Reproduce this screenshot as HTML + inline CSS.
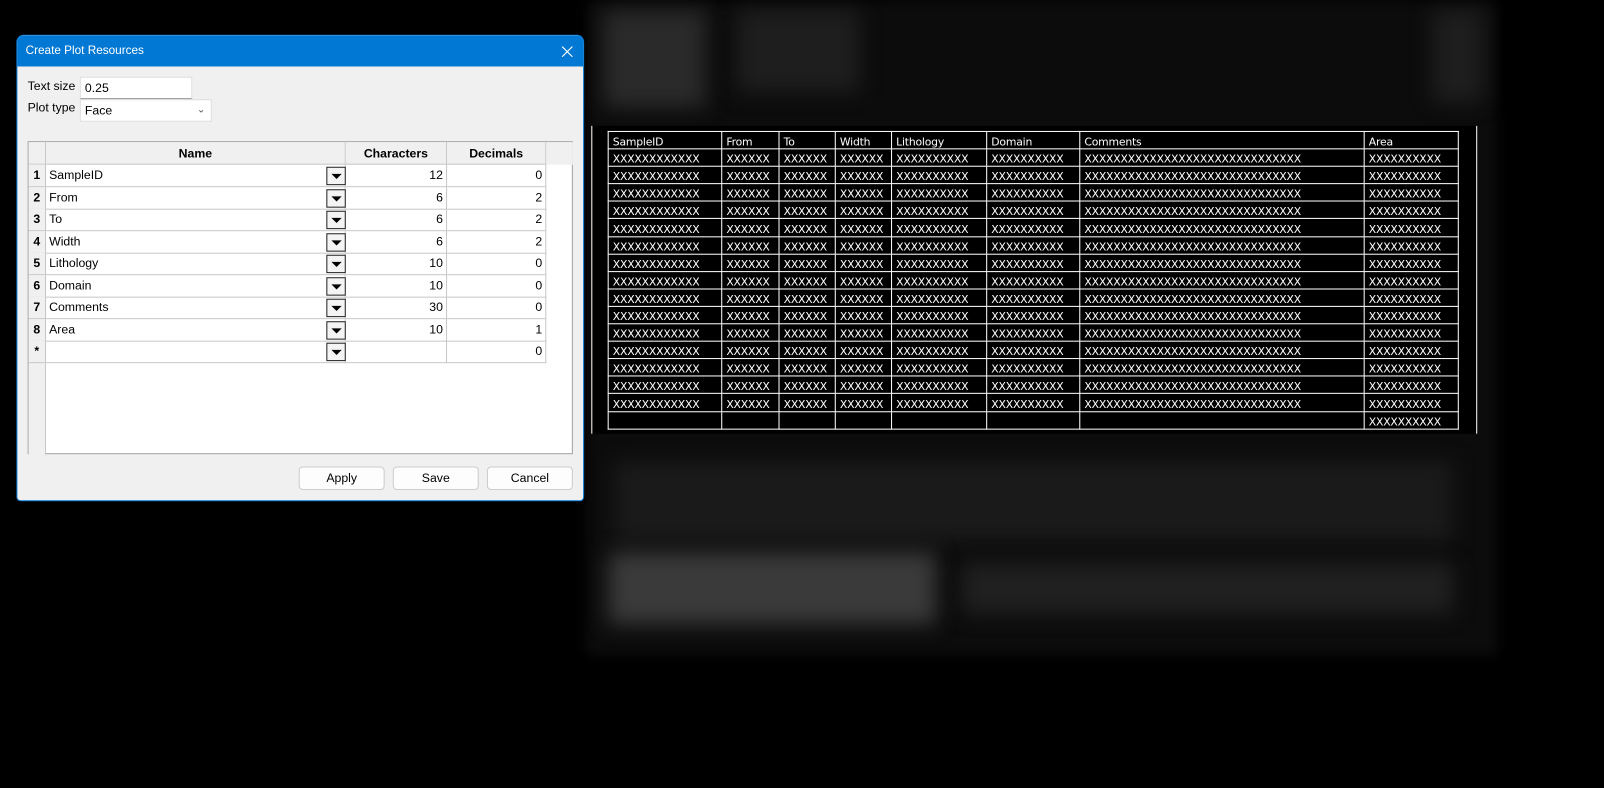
<!DOCTYPE html>
<html><head><meta charset="utf-8"><style>
*{box-sizing:border-box;margin:0;padding:0}
body{width:1604px;height:787px;background:#000;position:relative;overflow:hidden;font-family:"Segoe UI","Liberation Sans",sans-serif;font-size:12px;color:#000}
#wrap{position:absolute;left:0;top:0;width:1568px;height:770px;transform:scale(1.023);transform-origin:0 0}
.bl{position:absolute;filter:blur(10px)}
#dlg{position:absolute;left:16px;top:34px;width:555px;height:456px;background:#f0f0f0;border:1px solid #0078d4;border-radius:7px 7px 4px 4px;overflow:hidden}
#tb{height:30px;background:#0078d4;color:#fff;font-size:11.5px;line-height:30px;padding-left:8px;position:relative}
#tb svg{position:absolute;right:10px;top:10px}
.lbl{position:absolute;font-size:12px}
.inp{position:absolute;background:#fff;border:1px solid #ddd;border-bottom:1px solid #888;font-size:12px;padding-left:4px;line-height:20px}
#grid{position:absolute;left:10px;top:103px;width:533px;height:306px;background:#fff;border:1px solid #a0a0a0}
.gh{position:absolute;top:0;height:22px;background:#f0f0f0;border-right:1px solid #c8c8c8;border-bottom:1px solid #c8c8c8;font-weight:bold;text-align:center;line-height:22px;font-size:12px}
.rn{position:absolute;left:0;width:17px;background:#f0f0f0;font-weight:bold;text-align:center;border-bottom:1px solid #c8c8c8;border-right:1px solid #c8c8c8}
.c{position:absolute;border-right:1px solid #c8c8c8;border-bottom:1px solid #c8c8c8;line-height:21px;height:22px;font-size:12px}
.dd{position:absolute;width:19px;height:18px;border:1px solid #222;background:#f4f4f4}
.dd:after{content:"";position:absolute;left:4px;top:6px;border-left:5px solid transparent;border-right:5px solid transparent;border-top:5px solid #000}
.btn{position:absolute;top:421px;width:84px;height:23px;border:1px solid #ccc;background:#fdfdfd;border-radius:4px;text-align:center;line-height:21px;font-size:12px}
#plot{position:absolute;left:578px;top:123px;width:866px;height:301px;background:#000;border-left:1px solid #fff;border-right:1px solid #fff}
table{position:absolute;left:15px;top:5px;border-collapse:collapse;color:#fff;font-family:"DejaVu Sans","Liberation Sans",sans-serif;font-size:10.6px;letter-spacing:-0.2px}
tr{height:17.1px}
td{border:1px solid #fff;height:17.1px;padding:3px 4px 0 4px;line-height:12px;white-space:nowrap;overflow:hidden;vertical-align:bottom}
</style></head><body><div id="wrap">
<div style="position:absolute;left:573px;top:0;width:890px;height:640px;background:#0c0c0c;filter:blur(6px)"></div>
<div class="bl" style="left:590px;top:10px;width:100px;height:95px;background:#2a2a2a"></div>
<div class="bl" style="left:720px;top:10px;width:120px;height:80px;background:#1e1e1e"></div>
<div class="bl" style="left:1400px;top:10px;width:50px;height:90px;background:#1e1e1e"></div>
<div class="bl" style="left:600px;top:450px;width:820px;height:80px;background:#1a1a1a"></div>
<div class="bl" style="left:595px;top:540px;width:320px;height:70px;background:#3a3a3a"></div>
<div class="bl" style="left:940px;top:550px;width:480px;height:50px;background:#202020"></div>

<div id="dlg">
<div id="tb">Create Plot Resources<svg width="11" height="11" viewBox="0 0 11 11"><path d="M0.5 0.5L10.5 10.5M10.5 0.5L0.5 10.5" stroke="#fff" stroke-width="1.1"/></svg></div>
<div class="lbl" style="left:10px;top:42px">Text size</div>
<div class="inp" style="left:61px;top:40px;width:110px;height:22px">0.25</div>
<div class="lbl" style="left:10px;top:63px">Plot type</div>
<div class="inp" style="left:61px;top:62px;width:129px;height:22px;border-bottom:1px solid #ddd">Face<span style="position:absolute;right:5px;top:0;color:#555;font-size:10px">&#8964;</span></div>
<div id="grid">
<div class="gh" style="left:0;width:17px"></div>
<div class="gh" style="left:17px;width:293px">Name</div>
<div class="gh" style="left:310px;width:99px">Characters</div>
<div class="gh" style="left:409px;width:97px">Decimals</div>
<div class="gh" style="left:506px;width:26px;border-right:0;border-bottom:0"></div>
<div class="rn" style="top:22px;height:284px;border-bottom:0"></div>

<div class="rn" style="top:22px;height:22px;line-height:21px">1</div><div class="c" style="left:17px;top:22px;width:293px;padding-left:3px">SampleID</div><div class="dd" style="left:291px;top:24px"></div><div class="c" style="left:310px;top:22px;width:99px;text-align:right;padding-right:3px">12</div><div class="c" style="left:409px;top:22px;width:97px;text-align:right;padding-right:3px">0</div>
<div class="rn" style="top:43.5px;height:22px;line-height:21px">2</div><div class="c" style="left:17px;top:43.5px;width:293px;padding-left:3px">From</div><div class="dd" style="left:291px;top:45.5px"></div><div class="c" style="left:310px;top:43.5px;width:99px;text-align:right;padding-right:3px">6</div><div class="c" style="left:409px;top:43.5px;width:97px;text-align:right;padding-right:3px">2</div>
<div class="rn" style="top:65px;height:22px;line-height:21px">3</div><div class="c" style="left:17px;top:65px;width:293px;padding-left:3px">To</div><div class="dd" style="left:291px;top:67px"></div><div class="c" style="left:310px;top:65px;width:99px;text-align:right;padding-right:3px">6</div><div class="c" style="left:409px;top:65px;width:97px;text-align:right;padding-right:3px">2</div>
<div class="rn" style="top:86.5px;height:22px;line-height:21px">4</div><div class="c" style="left:17px;top:86.5px;width:293px;padding-left:3px">Width</div><div class="dd" style="left:291px;top:88.5px"></div><div class="c" style="left:310px;top:86.5px;width:99px;text-align:right;padding-right:3px">6</div><div class="c" style="left:409px;top:86.5px;width:97px;text-align:right;padding-right:3px">2</div>
<div class="rn" style="top:108px;height:22px;line-height:21px">5</div><div class="c" style="left:17px;top:108px;width:293px;padding-left:3px">Lithology</div><div class="dd" style="left:291px;top:110px"></div><div class="c" style="left:310px;top:108px;width:99px;text-align:right;padding-right:3px">10</div><div class="c" style="left:409px;top:108px;width:97px;text-align:right;padding-right:3px">0</div>
<div class="rn" style="top:129.5px;height:22px;line-height:21px">6</div><div class="c" style="left:17px;top:129.5px;width:293px;padding-left:3px">Domain</div><div class="dd" style="left:291px;top:131.5px"></div><div class="c" style="left:310px;top:129.5px;width:99px;text-align:right;padding-right:3px">10</div><div class="c" style="left:409px;top:129.5px;width:97px;text-align:right;padding-right:3px">0</div>
<div class="rn" style="top:151px;height:22px;line-height:21px">7</div><div class="c" style="left:17px;top:151px;width:293px;padding-left:3px">Comments</div><div class="dd" style="left:291px;top:153px"></div><div class="c" style="left:310px;top:151px;width:99px;text-align:right;padding-right:3px">30</div><div class="c" style="left:409px;top:151px;width:97px;text-align:right;padding-right:3px">0</div>
<div class="rn" style="top:172.5px;height:22px;line-height:21px">8</div><div class="c" style="left:17px;top:172.5px;width:293px;padding-left:3px">Area</div><div class="dd" style="left:291px;top:174.5px"></div><div class="c" style="left:310px;top:172.5px;width:99px;text-align:right;padding-right:3px">10</div><div class="c" style="left:409px;top:172.5px;width:97px;text-align:right;padding-right:3px">1</div>
<div class="rn" style="top:194px;height:22px;line-height:21px">*</div><div class="c" style="left:17px;top:194px;width:293px"></div><div class="dd" style="left:291px;top:196px"></div><div class="c" style="left:310px;top:194px;width:99px"></div><div class="c" style="left:409px;top:194px;width:97px;text-align:right;padding-right:3px">0</div>
</div>
<div class="btn" style="left:275px">Apply</div>
<div class="btn" style="left:367px">Save</div>
<div class="btn" style="left:459px">Cancel</div>
</div>

<div id="plot"><table>
<colgroup><col style="width:111px"><col style="width:56px"><col style="width:55px"><col style="width:55px"><col style="width:93px"><col style="width:91px"><col style="width:278px"><col style="width:92px"></colgroup>
<tr><td>SampleID</td><td>From</td><td>To</td><td>Width</td><td>Lithology</td><td>Domain</td><td>Comments</td><td>Area</td></tr>
<tr><td>XXXXXXXXXXXX</td><td>XXXXXX</td><td>XXXXXX</td><td>XXXXXX</td><td>XXXXXXXXXX</td><td>XXXXXXXXXX</td><td>XXXXXXXXXXXXXXXXXXXXXXXXXXXXXX</td><td>XXXXXXXXXX</td></tr>
<tr><td>XXXXXXXXXXXX</td><td>XXXXXX</td><td>XXXXXX</td><td>XXXXXX</td><td>XXXXXXXXXX</td><td>XXXXXXXXXX</td><td>XXXXXXXXXXXXXXXXXXXXXXXXXXXXXX</td><td>XXXXXXXXXX</td></tr>
<tr><td>XXXXXXXXXXXX</td><td>XXXXXX</td><td>XXXXXX</td><td>XXXXXX</td><td>XXXXXXXXXX</td><td>XXXXXXXXXX</td><td>XXXXXXXXXXXXXXXXXXXXXXXXXXXXXX</td><td>XXXXXXXXXX</td></tr>
<tr><td>XXXXXXXXXXXX</td><td>XXXXXX</td><td>XXXXXX</td><td>XXXXXX</td><td>XXXXXXXXXX</td><td>XXXXXXXXXX</td><td>XXXXXXXXXXXXXXXXXXXXXXXXXXXXXX</td><td>XXXXXXXXXX</td></tr>
<tr><td>XXXXXXXXXXXX</td><td>XXXXXX</td><td>XXXXXX</td><td>XXXXXX</td><td>XXXXXXXXXX</td><td>XXXXXXXXXX</td><td>XXXXXXXXXXXXXXXXXXXXXXXXXXXXXX</td><td>XXXXXXXXXX</td></tr>
<tr><td>XXXXXXXXXXXX</td><td>XXXXXX</td><td>XXXXXX</td><td>XXXXXX</td><td>XXXXXXXXXX</td><td>XXXXXXXXXX</td><td>XXXXXXXXXXXXXXXXXXXXXXXXXXXXXX</td><td>XXXXXXXXXX</td></tr>
<tr><td>XXXXXXXXXXXX</td><td>XXXXXX</td><td>XXXXXX</td><td>XXXXXX</td><td>XXXXXXXXXX</td><td>XXXXXXXXXX</td><td>XXXXXXXXXXXXXXXXXXXXXXXXXXXXXX</td><td>XXXXXXXXXX</td></tr>
<tr><td>XXXXXXXXXXXX</td><td>XXXXXX</td><td>XXXXXX</td><td>XXXXXX</td><td>XXXXXXXXXX</td><td>XXXXXXXXXX</td><td>XXXXXXXXXXXXXXXXXXXXXXXXXXXXXX</td><td>XXXXXXXXXX</td></tr>
<tr><td>XXXXXXXXXXXX</td><td>XXXXXX</td><td>XXXXXX</td><td>XXXXXX</td><td>XXXXXXXXXX</td><td>XXXXXXXXXX</td><td>XXXXXXXXXXXXXXXXXXXXXXXXXXXXXX</td><td>XXXXXXXXXX</td></tr>
<tr><td>XXXXXXXXXXXX</td><td>XXXXXX</td><td>XXXXXX</td><td>XXXXXX</td><td>XXXXXXXXXX</td><td>XXXXXXXXXX</td><td>XXXXXXXXXXXXXXXXXXXXXXXXXXXXXX</td><td>XXXXXXXXXX</td></tr>
<tr><td>XXXXXXXXXXXX</td><td>XXXXXX</td><td>XXXXXX</td><td>XXXXXX</td><td>XXXXXXXXXX</td><td>XXXXXXXXXX</td><td>XXXXXXXXXXXXXXXXXXXXXXXXXXXXXX</td><td>XXXXXXXXXX</td></tr>
<tr><td>XXXXXXXXXXXX</td><td>XXXXXX</td><td>XXXXXX</td><td>XXXXXX</td><td>XXXXXXXXXX</td><td>XXXXXXXXXX</td><td>XXXXXXXXXXXXXXXXXXXXXXXXXXXXXX</td><td>XXXXXXXXXX</td></tr>
<tr><td>XXXXXXXXXXXX</td><td>XXXXXX</td><td>XXXXXX</td><td>XXXXXX</td><td>XXXXXXXXXX</td><td>XXXXXXXXXX</td><td>XXXXXXXXXXXXXXXXXXXXXXXXXXXXXX</td><td>XXXXXXXXXX</td></tr>
<tr><td>XXXXXXXXXXXX</td><td>XXXXXX</td><td>XXXXXX</td><td>XXXXXX</td><td>XXXXXXXXXX</td><td>XXXXXXXXXX</td><td>XXXXXXXXXXXXXXXXXXXXXXXXXXXXXX</td><td>XXXXXXXXXX</td></tr>
<tr><td>XXXXXXXXXXXX</td><td>XXXXXX</td><td>XXXXXX</td><td>XXXXXX</td><td>XXXXXXXXXX</td><td>XXXXXXXXXX</td><td>XXXXXXXXXXXXXXXXXXXXXXXXXXXXXX</td><td>XXXXXXXXXX</td></tr>
<tr><td></td><td></td><td></td><td></td><td></td><td></td><td></td><td>XXXXXXXXXX</td></tr>
</table></div>
</div></body></html>
